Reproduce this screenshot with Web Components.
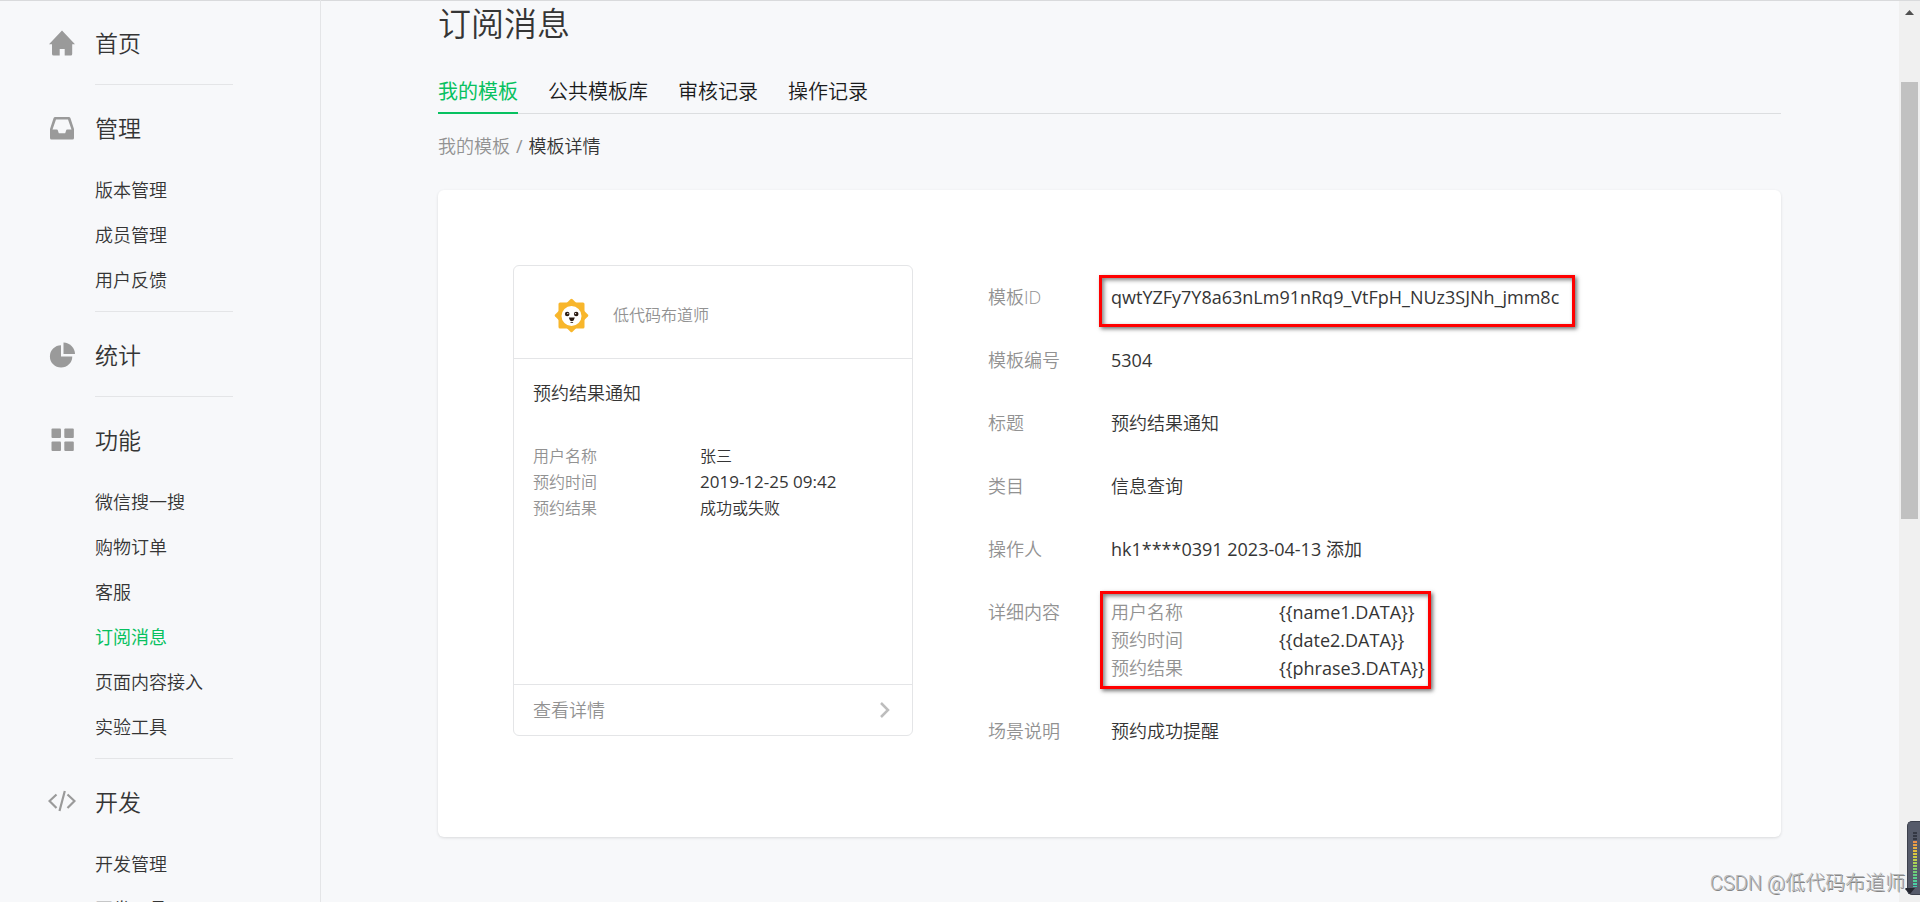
<!DOCTYPE html>
<html lang="zh-CN">
<head>
<meta charset="utf-8">
<meta name="viewport" content="width=device-width, initial-scale=1">
<title>订阅消息</title>
<style>
  body {
    margin: 0;
    background: #f7f8fa;
    color: #353535;
    font: 350 18px/28px "Open Sans", "Noto Sans CJK SC", sans-serif;
    --green: #07c160;
    --muted: #929292;
    --line: #e4e5e7;
  }
</style>
</head>
<body>
<app-shell>
  <side-nav slot="nav">
    <nav-section icon="home" label="首页"></nav-section>
    <nav-section icon="inbox" label="管理">
      <nav-item>版本管理</nav-item>
      <nav-item>成员管理</nav-item>
      <nav-item>用户反馈</nav-item>
    </nav-section>
    <nav-section icon="pie" label="统计"></nav-section>
    <nav-section icon="grid" label="功能">
      <nav-item>微信搜一搜</nav-item>
      <nav-item>购物订单</nav-item>
      <nav-item>客服</nav-item>
      <nav-item active>订阅消息</nav-item>
      <nav-item>页面内容接入</nav-item>
      <nav-item>实验工具</nav-item>
    </nav-section>
    <nav-section icon="code" label="开发">
      <nav-item>开发管理</nav-item>
      <nav-item>开发工具</nav-item>
    </nav-section>
  </side-nav>

  <page-header heading="订阅消息">
    <page-tab active>我的模板</page-tab>
    <page-tab>公共模板库</page-tab>
    <page-tab>审核记录</page-tab>
    <page-tab>操作记录</page-tab>
  </page-header>
  <bread-crumb parent="我的模板" current="模板详情"></bread-crumb>
  <detail-card>
    <template-preview slot="preview" account="低代码布道师" heading="预约结果通知" action="查看详情">
      <pair-row label="用户名称">张三</pair-row>
      <pair-row label="预约时间" latin>2019-12-25 09:42</pair-row>
      <pair-row label="预约结果">成功或失败</pair-row>
    </template-preview>
    <detail-row label="模板ID" latin><red-mark class="id">qwtYZFy7Y8a63nLm91nRq9_VtFpH_NUz3SJNh_jmm8c</red-mark></detail-row>
    <detail-row label="模板编号" latin>5304</detail-row>
    <detail-row label="标题">预约结果通知</detail-row>
    <detail-row label="类目">信息查询</detail-row>
    <detail-row label="操作人" latin>hk1****0391 2023-04-13 添加</detail-row>
    <detail-row label="详细内容"><red-mark class="fields">
      <pair-row label="用户名称" latin>{{name1.DATA}}</pair-row>
      <pair-row label="预约时间" latin>{{date2.DATA}}</pair-row>
      <pair-row label="预约结果" latin>{{phrase3.DATA}}</pair-row>
    </red-mark></detail-row>
    <detail-row label="场景说明">预约成功提醒</detail-row>
  </detail-card>

  <scroll-rail slot="rail"></scroll-rail>
  <water-mark slot="overlay">CSDN @低代码布道师</water-mark>
  <level-meter slot="overlay"></level-meter>
</app-shell>

<script>
const define = (name, render) => customElements.define(name, class extends HTMLElement {
  connectedCallback() {
    if (this.shadowRoot) return;
    this.attachShadow({ mode: "open" }).innerHTML = render(this);
  }
});
const attr = (el, name) => el.getAttribute(name) || "";

define("app-shell", () => `
  <style>
    :host { display: flex; position: relative; height: 100vh; overflow: hidden; background: #f7f8fa; box-shadow: inset 0 1px #d9dadc; }
    main { flex: 1; min-width: 0; padding: 0 118px 0 117px; }
  </style>
  <slot name="nav"></slot>
  <main><slot></slot></main>
  <slot name="rail"></slot>
  <slot name="overlay"></slot>`);

define("side-nav", () => `
  <style>
    :host { display: block; box-sizing: border-box; flex: 0 0 321px; border-right: 1px solid var(--line); }
  </style>
  <nav><slot></slot></nav>`);

const icons = {
  home: `<path d="M14 2.5 27 16.2h-2.800V26q0 1.500-1.500 1.500h-6V21h-5v6.500h-6Q4 27.500 4 26v-9.800H1Z"/>`,
  inbox: `<path fill-rule="evenodd" d="M7.200 4h13.600q1.200 0 1.600 1.100L26 16v9q0 1.500-1.500 1.500h-21Q2 26.500 2 25V16L5.600 5.100Q6 4 7.200 4ZM8 6.500 4.500 16.500H9q.6 0 .8.700l1 3h6.400l1-3q.2-.7.8-.7h4.500L20 6.500Z"/>`,
  pie: `<path d="M13 5.200v11.300h11.300A11.200 11.200 0 1 1 13 5.200Z"/><path d="M15.500 2.500A11.700 11.700 0 0 1 27 14H15.500Z"/>`,
  grid: `<rect x="3.500" y="3.500" width="9.500" height="9.500" rx="1"/><rect x="16.300" y="3.500" width="9.500" height="9.500" rx="1"/><rect x="3.500" y="16.500" width="9.500" height="9.500" rx="1"/><rect x="16.300" y="16.500" width="9.500" height="9.500" rx="1"/>`,
  code: `<path fill="none" stroke="#9a9a9a" stroke-width="2.200" d="M8.500 7.500 1.500 14l7 7M19.500 7.500l7 6.500-7 7M16.800 4l-5.300 20"/>`
};

define("nav-section", el => `
  <style>
    :host { display: block; padding-top: 23px; }
    .head { display: flex; align-items: center; height: 40px; padding-left: 48px; gap: 19px; font-size: 23px; color: inherit; text-decoration: none; }
    svg { width: 28px; height: 30px; fill: #9a9a9a; }
    .items { padding: 20px 0 8px 95px; }
    .items.empty { padding: 0 0 21px; }
    hr { margin: 0 0 0 95px; width: 138px; border: 0; height: 1px; background: var(--line); }
  </style>
  <a class="head" href="#"><svg viewBox="0 0 28 30" aria-hidden="true">${icons[attr(el, "icon")]}</svg>${attr(el, "label")}</a>
  <div class="items ${el.querySelector("nav-item") ? "" : "empty"}"><slot></slot></div>
  <hr>`);

define("nav-item", () => `
  <style>
    :host { display: block; }
    a { display: block; line-height: 45px; color: inherit; text-decoration: none; }
    :host([active]) a { color: var(--green); font-weight: 400; }
  </style>
  <a href="#"><slot></slot></a>`);

define("page-header", el => `
  <style>
    h1 { margin: 0; padding: 2px 0 24px; font-size: 33px; line-height: 44px; font-weight: inherit; }
    :host { display: block; }
    nav { display: flex; gap: 30px; border-bottom: 1px solid #dcdee0; }
  </style>
  <h1>${attr(el, "heading")}</h1>
  <nav><slot></slot></nav>`);

define("page-tab", () => `
  <style>
    :host { display: block; margin-bottom: -1px; }
    a { display: block; padding-top: 2px; font-size: 20px; line-height: 40px; color: #1a1b1c; text-decoration: none; border-bottom: 2px solid transparent; }
    :host([active]) a { color: var(--green); border-color: var(--green); font-weight: 400; }
  </style>
  <a href="#"><slot></slot></a>`);

define("bread-crumb", el => `
  <style>
    :host { display: flex; gap: 6px; padding: 18px 0 30px; color: var(--muted); }
    a { color: inherit; text-decoration: none; }
    b { color: #353535; font-weight: inherit; }
    span { font-weight: 400; }
  </style>
  <a href="#">${attr(el, "parent")}</a><span>/</span><b>${attr(el, "current")}</b>`);

define("detail-card", () => `
  <style>
    :host { display: flex; gap: 75px; padding: 75px 75px 92px; background: #fff; border-radius: 6px; box-shadow: 0 1px 3px rgba(0,0,0,.12); }
    .rows { flex: 1; min-width: 0; display: flex; flex-direction: column; gap: 35px; padding-top: 18px; }
  </style>
  <slot name="preview"></slot>
  <div class="rows"><slot></slot></div>`);

define("template-preview", el => `
  <style>
    :host { display: flex; flex-direction: column; box-sizing: border-box; flex: 0 0 400px; height: 471px; border: 1px solid var(--line); border-radius: 6px; font-size: 16px; --label: 167px; --row: 26px; --latin: 17px; }
    header { display: flex; align-items: center; gap: 24px; height: 93px; padding-top: 6px; box-sizing: border-box; padding-left: 40px; color: var(--muted); border-bottom: 1px solid var(--line); }
    .body { flex: 1; padding: 20px 19px 0; }
    h2 { margin: 0 0 36px; font-size: 18px; line-height: 28px; font-weight: inherit; }
    button { display: flex; justify-content: space-between; align-items: center; height: 51px; padding: 0 20px 0 19px; border: 0; border-top: 1px solid var(--line); background: none; font: inherit; font-size: 18px; color: var(--muted); }
  </style>
  <header>
    <svg width="35" height="35" viewBox="0 0 35 35" aria-hidden="true">
      <g fill="#f8b62b"><rect x="4.500" y="4.500" width="26" height="26" rx="1.500"/><rect x="5.200" y="5.200" width="24.600" height="24.600" rx="1.500" transform="rotate(45 17.500 17.500)"/></g>
      <circle cx="17.500" cy="18" r="10" fill="#fff"/>
      <g fill="#2a1a12"><circle cx="13.200" cy="16" r="2.300"/><circle cx="22.200" cy="16" r="2.300"/><path d="M14.800 19.600h6l-1.200 2.800-1.800.8-1.800-.8Z"/><path d="M16.500 24.200h2.600v.8h-2.600Z"/></g>
      <g fill="#fff"><circle cx="13.800" cy="15.600" r=".7"/><circle cx="21.600" cy="15.600" r=".7"/></g>
    </svg>
    <span>${attr(el, "account")}</span>
  </header>
  <div class="body"><h2>${attr(el, "heading")}</h2><slot></slot></div>
  <button type="button">${attr(el, "action")}<svg width="14" height="18" viewBox="0 0 14 18" fill="none" stroke="#bdbdbd" stroke-width="2.500" aria-hidden="true"><path d="M3 2l7 7-7 7"/></svg></button>`);

define("pair-row", el => `
  <style>
    :host { display: grid; grid-template-columns: var(--label) auto; line-height: var(--row); white-space: nowrap; }
    span { color: var(--muted); }
    :host([latin]) div { font-weight: 400; font-size: var(--latin); }
  </style>
  <span>${attr(el, "label")}</span><div><slot></slot></div>`);

define("detail-row", el => `
  <style>
    :host { display: grid; grid-template-columns: 123px auto; justify-content: start; --label: 168px; --row: 28px; --latin: 18px; }
    span { color: var(--muted); }
    :host([latin]) div { font-weight: 400; }
  </style>
  <span>${attr(el, "label")}</span><div><slot></slot></div>`);

define("red-mark", () => `
  <style>
    :host { display: block; position: relative; }
    i { position: absolute; inset: -8px -16px -16px -12px; border: 3px solid #f00; box-shadow: 2px 2px 4px rgba(0,0,0,.55), inset 2px 2px 4px rgba(0,0,0,.5); pointer-events: none; }
    :host(.fields) i { inset: -7px -6px -7px -11px; }
  </style>
  <slot></slot><i></i>`);

define("scroll-rail", () => `
  <style>
    :host { display: flex; flex-direction: column; box-sizing: border-box; flex: 0 0 21px; margin-top: 1px; background: #f0f0f0; }
    svg { flex: none; }
    .track { flex: 1; display: grid; grid-template-rows: 60fr 437fr 362fr; padding: 0 2px; }
    .thumb { grid-row: 2; background: #c1c1c1; }
  </style>
  <svg width="21" height="21" aria-hidden="true"><path d="M6 14 10.500 9 15 14Z" fill="#505050"/></svg>
  <div class="track"><div class="thumb"></div></div>
  <svg width="21" height="21" aria-hidden="true"><path d="M6 8h9l-4.500 5Z" fill="#30313a"/></svg>`);

define("water-mark", () => `
  <style>
    :host { position: absolute; right: 15px; bottom: 5px; font: 300 20px/28px Roboto, "Noto Sans CJK SC", sans-serif; color: #b8b9ba; text-shadow: 1px 1px 0 #858585; white-space: nowrap; }
  </style>
  <slot></slot>`);

define("level-meter", () => `
  <style>
    :host { position: absolute; right: 0; bottom: 7px; box-sizing: border-box; width: 13px; height: 74px; padding: 9px 3px 7px 5px; border: 1px solid #3c404c; border-right: 0; border-radius: 5px 0 0 5px; background: #565b6a; }
    div { height: 100%; background: repeating-linear-gradient(#565b6a 0 1px, transparent 1px 3px), linear-gradient(#343844 0 17%, #ee8a4a 17%, #e3c43c 38%, #b4d450 55%, #6ad07a 75%, #42d0b0); }
    svg { position: absolute; left: -3px; bottom: 0; }
  </style>
  <div></div>
  <svg width="10" height="6" aria-hidden="true"><path d="M0 0h10L5 6Z" fill="#262730"/></svg>`);
</script>
</body>
</html>
